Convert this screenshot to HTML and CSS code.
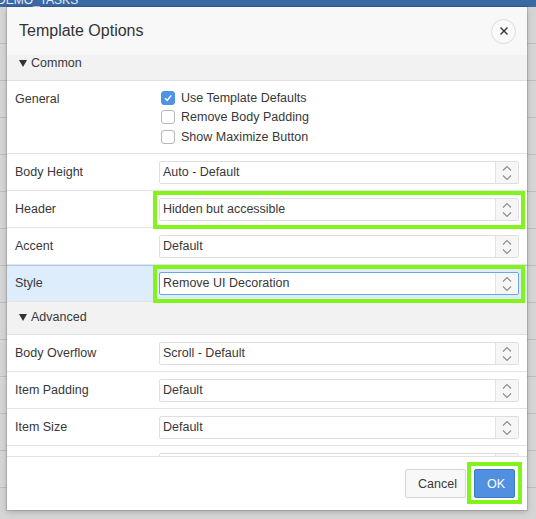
FILE: index.html
```html
<!DOCTYPE html>
<html>
<head>
<meta charset="utf-8">
<link rel="stylesheet" href="styles.css">
</head>
<body>
<div class="page">
  <div class="topbar"><span class="app-name">DEMO_TASKS</span></div>
  <div class="backdrop"></div>
</div>

<div class="dialog">
  <div class="dlg-header">
    <h1 class="dlg-title">Template Options</h1>
    <button class="close-btn" aria-label="Close">
      <svg width="10" height="10" viewBox="0 0 10 10"><path d="M1.5 1.5 L8.5 8.5 M8.5 1.5 L1.5 8.5" stroke="#333" stroke-width="1.4" fill="none"/></svg>
    </button>
  </div>

  <div class="dlg-body">
    <div class="section-head first"><span class="tri"></span>Common</div>

    <div class="row row-general">
      <div class="label label-top">General</div>
      <div class="value checks">
        <label class="check"><span class="box checked"><svg width="10" height="10" viewBox="0 0 10 10"><path d="M2 5.2 L4.2 7.4 L8.2 2.4" stroke="#fff" stroke-width="1.5" fill="none"/></svg></span>Use Template Defaults</label>
        <label class="check"><span class="box"></span>Remove Body Padding</label>
        <label class="check"><span class="box"></span>Show Maximize Button</label>
      </div>
    </div>

    <div class="row">
      <div class="label">Body Height</div>
      <div class="value"><div class="select"><span class="sel-text">Auto - Default</span><span class="sel-arrow"><svg width="10" height="16" viewBox="0 0 10 16"><path d="M1 5.5 L5 1.5 L9 5.5 M1 10.5 L5 14.5 L9 10.5" stroke="#8a8a8a" stroke-width="1.1" fill="none"/></svg></span></div></div>
    </div>

    <div class="row">
      <div class="label">Header</div>
      <div class="value"><div class="select hl"><span class="sel-text">Hidden but accessible</span><span class="sel-arrow"><svg width="10" height="16" viewBox="0 0 10 16"><path d="M1 5.5 L5 1.5 L9 5.5 M1 10.5 L5 14.5 L9 10.5" stroke="#8a8a8a" stroke-width="1.1" fill="none"/></svg></span></div></div>
    </div>

    <div class="row">
      <div class="label">Accent</div>
      <div class="value"><div class="select"><span class="sel-text">Default</span><span class="sel-arrow"><svg width="10" height="16" viewBox="0 0 10 16"><path d="M1 5.5 L5 1.5 L9 5.5 M1 10.5 L5 14.5 L9 10.5" stroke="#8a8a8a" stroke-width="1.1" fill="none"/></svg></span></div></div>
    </div>

    <div class="row row-active">
      <div class="label">Style</div>
      <div class="value"><div class="select hl focused"><span class="sel-text">Remove UI Decoration</span><span class="sel-arrow"><svg width="10" height="16" viewBox="0 0 10 16"><path d="M1 5.5 L5 1.5 L9 5.5 M1 10.5 L5 14.5 L9 10.5" stroke="#8a8a8a" stroke-width="1.1" fill="none"/></svg></span></div></div>
    </div>

    <div class="section-head second"><span class="tri"></span>Advanced</div>

    <div class="row">
      <div class="label">Body Overflow</div>
      <div class="value"><div class="select"><span class="sel-text">Scroll - Default</span><span class="sel-arrow"><svg width="10" height="16" viewBox="0 0 10 16"><path d="M1 5.5 L5 1.5 L9 5.5 M1 10.5 L5 14.5 L9 10.5" stroke="#8a8a8a" stroke-width="1.1" fill="none"/></svg></span></div></div>
    </div>

    <div class="row">
      <div class="label">Item Padding</div>
      <div class="value"><div class="select"><span class="sel-text">Default</span><span class="sel-arrow"><svg width="10" height="16" viewBox="0 0 10 16"><path d="M1 5.5 L5 1.5 L9 5.5 M1 10.5 L5 14.5 L9 10.5" stroke="#8a8a8a" stroke-width="1.1" fill="none"/></svg></span></div></div>
    </div>

    <div class="row">
      <div class="label">Item Size</div>
      <div class="value"><div class="select"><span class="sel-text">Default</span><span class="sel-arrow"><svg width="10" height="16" viewBox="0 0 10 16"><path d="M1 5.5 L5 1.5 L9 5.5 M1 10.5 L5 14.5 L9 10.5" stroke="#8a8a8a" stroke-width="1.1" fill="none"/></svg></span></div></div>
    </div>

    <div class="row">
      <div class="label"></div>
      <div class="value"><div class="select"><span class="sel-text"></span><span class="sel-arrow"><svg width="10" height="16" viewBox="0 0 10 16"><path d="M1 5.5 L5 1.5 L9 5.5 M1 10.5 L5 14.5 L9 10.5" stroke="#8a8a8a" stroke-width="1.1" fill="none"/></svg></span></div></div>
    </div>
  </div>

  <div class="dlg-footer">
    <button class="btn btn-cancel">Cancel</button>
    <button class="btn btn-ok">OK</button>
  </div>
</div>
</body>
</html>
```

FILE: styles.css
```css
* { box-sizing: border-box; }

html, body {
  margin: 0;
  padding: 0;
  width: 536px;
  height: 519px;
  overflow: hidden;
}

body {
  font-family: "Liberation Sans", Arial, Helvetica, sans-serif;
  color: #383838;
  background: #d3d3d3;
}

.page {
  width: 536px;
  height: 519px;
  display: flex;
  flex-direction: column;
}

.topbar {
  height: 7px;
  background: #3b69a4;
  overflow: hidden;
  flex: none;
}

.app-name {
  display: block;
  margin-top: -7px;
  margin-left: -3px;
  color: #e6edf6;
  font-size: 12px;
  line-height: 14px;
}

.backdrop {
  flex: 1;
  background-color: #d5d5d5;
  background-image: repeating-linear-gradient(180deg, transparent 0, transparent 36px, #bdbdbd 36px, #bdbdbd 37px);
}

.dialog {
  position: absolute;
  left: 7px;
  top: 7px;
  width: 520px;
  height: 503px;
  background: #fff;
  display: flex;
  flex-direction: column;
  box-shadow: 0 0 0 1px rgba(0,0,0,0.12), 0 2px 6px rgba(0,0,0,0.2);
}

.dlg-header {
  height: 48px;
  flex: none;
  background: #f8f8f8;
  display: flex;
  align-items: center;
  justify-content: space-between;
  padding: 0 11px 0 12px;
}

.dlg-title {
  margin: 0;
  font-size: 16px;
  font-weight: normal;
  color: #333;
}

.close-btn {
  width: 25px;
  height: 25px;
  border-radius: 50%;
  border: 1px solid #dcdcdc;
  background: #fafafa;
  padding: 0;
  display: flex;
  align-items: center;
  justify-content: center;
}

.dlg-body {
  flex: 1;
  overflow: hidden;
  position: relative;
}

.section-head {
  background: #f2f2f2;
  border-bottom: 1px solid #e0e0e0;
  font-size: 12.5px;
  line-height: 16px;
  padding: 0 12px 9px;
  color: #383838;
  display: flex;
  align-items: center;
}

.section-head.second {
  padding-top: 7px;
}

.tri {
  width: 0;
  height: 0;
  border-left: 4px solid transparent;
  border-right: 4px solid transparent;
  border-top: 7px solid #333;
  margin-right: 4px;
}

.row {
  display: grid;
  grid-template-columns: 146px 1fr;
  border-bottom: 1px solid #e4e4e4;
  align-items: center;
}

.row-active {
  background: #deedfb;
  box-shadow: inset 0 1px 0 #a4cbf0;
}

.label {
  padding-left: 8px;
  font-size: 12.5px;
  color: #383838;
}

.label-top {
  align-self: start;
  padding-top: 11px;
}

.value {
  padding: 7px 8px 6px 6px;
}

.checks {
  padding: 7px 8px 6.5px 8px;
  display: flex;
  flex-direction: column;
}

.check {
  height: 19.5px;
  display: flex;
  align-items: center;
  font-size: 12.5px;
  color: #383838;
}

.box {
  width: 14px;
  height: 14px;
  border: 1px solid #b9b9b9;
  border-radius: 3px;
  background: #fff;
  margin-right: 6px;
  display: flex;
  align-items: center;
  justify-content: center;
}

.box.checked {
  background: #4f93e6;
  border-color: #4f93e6;
}

.select {
  position: relative;
  height: 23px;
  border: 1px solid #dedede;
  border-radius: 2px;
  background: #fff;
  display: flex;
  align-items: stretch;
}

.select.focused {
  border-color: #6aa5e6;
}

.sel-text {
  flex: 1;
  padding-left: 3px;
  font-size: 12.5px;
  line-height: 21px;
  color: #383838;
}

.sel-arrow {
  width: 23px;
  border-left: 1px solid #e2e2e2;
  background: #f6f6f6;
  display: flex;
  align-items: center;
  justify-content: center;
}

.hl::after,
.btn-ok::after {
  content: "";
  position: absolute;
  border: 4px solid #82f41b;
  pointer-events: none;
}

.hl::after {
  inset: -8px -7px -9px -7px;
}

.dlg-footer {
  height: 54px;
  flex: none;
  border-top: 1px solid #e2e2e2;
  display: flex;
  justify-content: flex-end;
  align-items: flex-start;
  gap: 8px;
  padding: 12px 12px 0;
}

.btn {
  position: relative;
  height: 29px;
  border-radius: 2px;
  font-family: "Liberation Sans", Arial, Helvetica, sans-serif;
  font-size: 12.5px;
  padding: 0 12px;
}

.btn-cancel {
  width: 61px;
  background: #f8f8f8;
  border: 1px solid #d6d6d6;
  color: #383838;
}

.btn-ok {
  width: 41px;
  background: #5190e0;
  border: 1px solid #3f7bcb;
  color: #fff;
}

.btn-ok::after {
  inset: -8px -8px -7px -8px;
}
```
